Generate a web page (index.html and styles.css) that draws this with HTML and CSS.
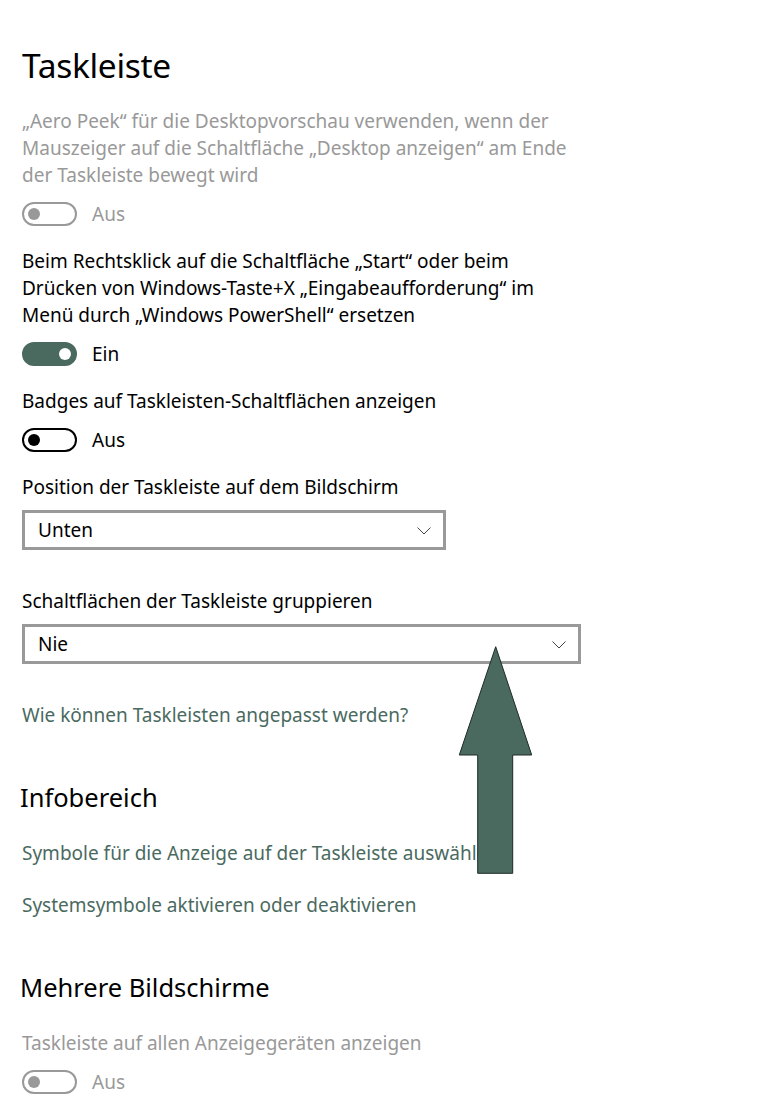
FILE: index.html
```html
<!DOCTYPE html>
<html lang="de">
<head>
  <meta charset="UTF-8">
  <meta name="viewport" content="width=device-width, initial-scale=1.0">
  <title>Taskleiste</title>
  <link rel="stylesheet" href="styles.css">
</head>
<body>
  <div class="page">
    <h1 class="title">Taskleiste</h1>

    <div class="setting first">
      <p class="label muted">„Aero Peek“ für die Desktopvorschau verwenden, wenn der Mauszeiger auf die Schaltfläche „Desktop anzeigen“ am Ende der Taskleiste bewegt wird</p>
      <div class="toggle-row">
        <span class="toggle disabled"><span class="knob"></span></span>
        <span class="state muted">Aus</span>
      </div>
    </div>

    <div class="setting">
      <p class="label">Beim Rechtsklick auf die Schaltfläche „Start“ oder beim Drücken von Windows-Taste+X „Eingabeaufforderung“ im Menü durch „Windows PowerShell“ ersetzen</p>
      <div class="toggle-row">
        <span class="toggle on"><span class="knob"></span></span>
        <span class="state">Ein</span>
      </div>
    </div>

    <div class="setting">
      <p class="label">Badges auf Taskleisten-Schaltflächen anzeigen</p>
      <div class="toggle-row">
        <span class="toggle"><span class="knob"></span></span>
        <span class="state">Aus</span>
      </div>
    </div>

    <div class="setting">
      <p class="label">Position der Taskleiste auf dem Bildschirm</p>
      <div class="select short">
        <span>Unten</span>
        <svg class="chevron" width="14" height="8" viewBox="0 0 14 8"><path d="M0.5 0.5 L7 7 L13.5 0.5" fill="none" stroke="#444" stroke-width="1"/></svg>
      </div>
    </div>

    <div class="setting wide-gap">
      <p class="label">Schaltflächen der Taskleiste gruppieren</p>
      <div class="select long">
        <span>Nie</span>
        <svg class="chevron" width="14" height="8" viewBox="0 0 14 8"><path d="M0.5 0.5 L7 7 L13.5 0.5" fill="none" stroke="#444" stroke-width="1"/></svg>
      </div>
    </div>

    <a class="link after-select" href="#">Wie können Taskleisten angepasst werden?</a>

    <h2 class="heading">Infobereich</h2>
    <a class="link" href="#">Symbole für die Anzeige auf der Taskleiste auswählen</a>
    <a class="link second" href="#">Systemsymbole aktivieren oder deaktivieren</a>

    <h2 class="heading">Mehrere Bildschirme</h2>
    <div class="setting after-heading">
      <p class="label muted">Taskleiste auf allen Anzeigegeräten anzeigen</p>
      <div class="toggle-row">
        <span class="toggle disabled"><span class="knob"></span></span>
        <span class="state muted">Aus</span>
      </div>
    </div>

    <svg class="arrow" width="76" height="232" viewBox="0 0 76 232">
      <polygon points="37.7,1.7 73.7,110 54.7,110 54.7,228.3 19.7,228.3 19.7,110 1.3,110" fill="#4a6a5f" stroke="#1e2a26" stroke-width="1"/>
    </svg>
  </div>
</body>
</html>
```

FILE: styles.css
```css
body {
  margin: 0;
  background: #fff;
  font-family: "Segoe UI", "Noto Sans", "Open Sans", sans-serif;
  color: #000;
}
.page {
  position: relative;
  padding: 41px 22px 0 22px;
  width: 729px;
  height: 1070px;
  overflow: hidden;
}
.title {
  margin: 0;
  font-size: 33.5px;
  font-weight: 400;
  line-height: 48px;
  letter-spacing: -0.3px;
}
.setting {
  margin-top: 21.5px;
}
.setting.first {
  margin-top: 18.5px;
}
.setting.wide-gap {
  margin-top: 37.5px;
}
.setting.after-heading {
  margin-top: 24.5px;
}
.label {
  margin: 0;
  width: 556px;
  font-size: 19px;
  line-height: 27px;
}
.muted {
  color: #999;
}
.toggle-row {
  display: flex;
  align-items: center;
  gap: 15px;
  margin-top: 13.5px;
  height: 24px;
}
.toggle {
  box-sizing: border-box;
  width: 55px;
  height: 24px;
  border: 2px solid #000;
  border-radius: 12px;
  display: flex;
  align-items: center;
  padding: 0 4px;
}
.knob {
  width: 12px;
  height: 12px;
  border-radius: 50%;
  background: #000;
}
.toggle.disabled {
  border-color: #999;
}
.toggle.disabled .knob {
  background: #999;
}
.toggle.on {
  background: #4a6a5f;
  border-color: #4a6a5f;
  justify-content: flex-end;
}
.toggle.on .knob {
  background: #fff;
}
.state {
  font-size: 19px;
  line-height: 24px;
}
.select {
  box-sizing: border-box;
  margin-top: 9.5px;
  height: 40px;
  border: 3px solid #999;
  display: flex;
  align-items: center;
  justify-content: space-between;
  padding: 0 12px 0 13px;
  font-size: 19px;
}
.select.short {
  width: 424px;
}
.select.long {
  width: 559px;
}
.chevron {
  margin-top: 1px;
}
.link {
  display: block;
  color: #4a6a5f;
  text-decoration: none;
  font-size: 19px;
  line-height: 27px;
  margin-top: 24.5px;
}
.link.after-select {
  margin-top: 37.5px;
}
.link.second {
  margin-top: 25px;
}
.heading {
  margin: 50.5px 0 0 -2px;
  font-size: 25.5px;
  font-weight: 400;
  line-height: 36px;
}
.arrow {
  position: absolute;
  left: 458px;
  top: 645px;
}
```
